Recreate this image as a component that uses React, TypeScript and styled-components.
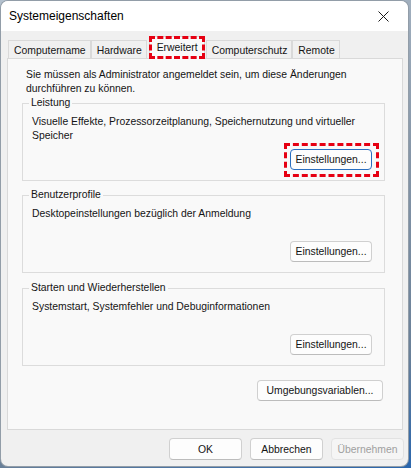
import React from "react";
import styled, { createGlobalStyle } from "styled-components";

const GlobalStyle = createGlobalStyle`
	html, body {
		margin: 0;
		padding: 0;
	}
	body {
		width: 411px;
		height: 468px;
		overflow: hidden;
		background: linear-gradient(165deg, #b4c1ce 0%, #8696a8 45%, #6a8098 80%, #2a66ad 100%);
		font-family: "Liberation Sans", Arial, sans-serif;
	}
`;

const Window = styled.div`
	box-sizing: border-box;
	width: 409px;
	height: 467px;
	background: #f0f0f0;
	border: 1px solid rgba(70, 90, 110, 0.55);
	border-radius: 8px;
	overflow: hidden;
	display: flex;
	flex-direction: column;
	font-size: 10.4px;
	color: #141414;
`;

const TitleBar = styled.div`
	height: 30px;
	flex: none;
	background: #fff;
	display: flex;
	align-items: center;
	justify-content: space-between;
	padding-left: 8px;
`;

const Title = styled.span`
	font-size: 12px;
	color: #000;
`;

const CloseBtn = styled.div`
	width: 46px;
	height: 30px;
	display: flex;
	align-items: center;
	justify-content: center;
	margin-right: 2px;
`;

const Body = styled.div`
	flex: 1;
	display: flex;
	flex-direction: column;
	padding: 0 5px 0 6px;
`;

const TabStrip = styled.div`
	height: 27px;
	display: flex;
	align-items: flex-end;
	padding-left: 1px;
	position: relative;
	z-index: 1;
`;

const Tab = styled.div<{ active?: boolean }>`
	box-sizing: border-box;
	height: 18px;
	padding: 1px 4px 0 5px;
	display: flex;
	align-items: center;
	border: 1px solid #d9d9d9;
	border-bottom: none;
	background: #f0f0f0;
	position: relative;
	white-space: nowrap;
	${({ active }) =>
		active &&
		`
		height: 23px;
		padding: 0 6px 2px 7px;
		margin: 0 1px -1px 2px;
		background: #f9f9f9;
		&::after {
			content: "";
			position: absolute;
			inset: -1px -1px 0 -1px;
			border: 3px dashed #e60012;
		}
	`}
`;

const Panel = styled.div`
	box-sizing: border-box;
	height: 372px;
	border: 1px solid #d9d9d9;
	background: #f9f9f9;
	padding: 9px 17px 0 14px;
	display: flex;
	flex-direction: column;
`;

const Intro = styled.p`
	margin: 0;
	padding-left: 4px;
	line-height: 14px;
	white-space: nowrap;
`;

const Group = styled.fieldset<{ gapTop: number }>`
	margin: ${({ gapTop }) => gapTop}px 0 0;
	padding: 5px 12px 10px 9px;
	border: 1px solid #dcdcdc;
	border-radius: 0;
	min-width: 0;
	display: flex;
	flex-direction: column;
`;

const Legend = styled.legend`
	padding: 0 2px;
	margin-left: -3px;
	line-height: 14px;
`;

const Desc = styled.div`
	line-height: 14px;
	min-height: 28px;
	white-space: nowrap;
`;

const ButtonRow = styled.div<{ top: number; right?: number }>`
	display: flex;
	justify-content: flex-end;
	margin-top: ${({ top }) => top}px;
	margin-right: ${({ right }) => right || 0}px;
`;

const Button = styled.button<{ focused?: boolean; minW?: number }>`
	box-sizing: border-box;
	height: 21px;
	min-width: ${({ minW }) => minW || 73}px;
	padding: 0 4px;
	font-family: inherit;
	font-size: 10.4px;
	color: #141414;
	background: #fdfdfd;
	border: 1px solid ${({ focused }) => (focused ? "#2a6fc0" : "#d0d0d0")};
	border-bottom-color: ${({ focused }) => (focused ? "#2a6fc0" : "#bcbcbc")};
	border-radius: 4px;
	position: relative;
	white-space: nowrap;
	&:disabled {
		color: #a0a0a0;
		border-color: #e2e2e2;
		background: #f5f5f5;
	}
	${({ focused }) =>
		focused &&
		`
		&::after {
			content: "";
			position: absolute;
			inset: -7px -8px -8px -7px;
			border: 3px dashed #e60012;
		}
	`}
`;

const Footer = styled.div`
	display: flex;
	justify-content: flex-end;
	gap: 8px;
	margin: 8px -1px 0 0;
`;

const FooterButton = styled(Button)`
	height: 22px;
`;

const CloseIcon = () => (
	<svg width="11" height="11" viewBox="0 0 11 11">
		<path d="M0.5 0.5 L10.5 10.5 M10.5 0.5 L0.5 10.5" stroke="#1a1a1a" strokeWidth="1" />
	</svg>
);

const tabs = ["Computername", "Hardware", "Erweitert", "Computerschutz", "Remote"];

export default function App() {
	return (
		<>
			<GlobalStyle />
			<Window>
				<TitleBar>
					<Title>Systemeigenschaften</Title>
					<CloseBtn>
						<CloseIcon />
					</CloseBtn>
				</TitleBar>
				<Body>
					<TabStrip>
						{tabs.map((t) => (
							<Tab key={t} active={t === "Erweitert"}>
								{t}
							</Tab>
						))}
					</TabStrip>
					<Panel>
						<Intro>
							Sie müssen als Administrator angemeldet sein, um diese Änderungen
							<br />
							durchführen zu können.
						</Intro>
						<Group gapTop={0}>
							<Legend>Leistung</Legend>
							<Desc>
								Visuelle Effekte, Prozessorzeitplanung, Speichernutzung und virtueller
								<br />
								Speicher
							</Desc>
							<ButtonRow top={6}>
								<Button focused minW={82}>Einstellungen...</Button>
							</ButtonRow>
						</Group>
						<Group gapTop={7}>
							<Legend>Benutzerprofile</Legend>
							<Desc>Desktopeinstellungen bezüglich der Anmeldung</Desc>
							<ButtonRow top={6}>
								<Button minW={82}>Einstellungen...</Button>
							</ButtonRow>
						</Group>
						<Group gapTop={8}>
							<Legend>Starten und Wiederherstellen</Legend>
							<Desc>Systemstart, Systemfehler und Debuginformationen</Desc>
							<ButtonRow top={6}>
								<Button minW={82}>Einstellungen...</Button>
							</ButtonRow>
						</Group>
						<ButtonRow top={14} right={2}>
							<Button minW={126}>Umgebungsvariablen...</Button>
						</ButtonRow>
					</Panel>
					<Footer>
						<FooterButton>OK</FooterButton>
						<FooterButton>Abbrechen</FooterButton>
						<FooterButton disabled>Übernehmen</FooterButton>
					</Footer>
				</Body>
			</Window>
		</>
	);
}
